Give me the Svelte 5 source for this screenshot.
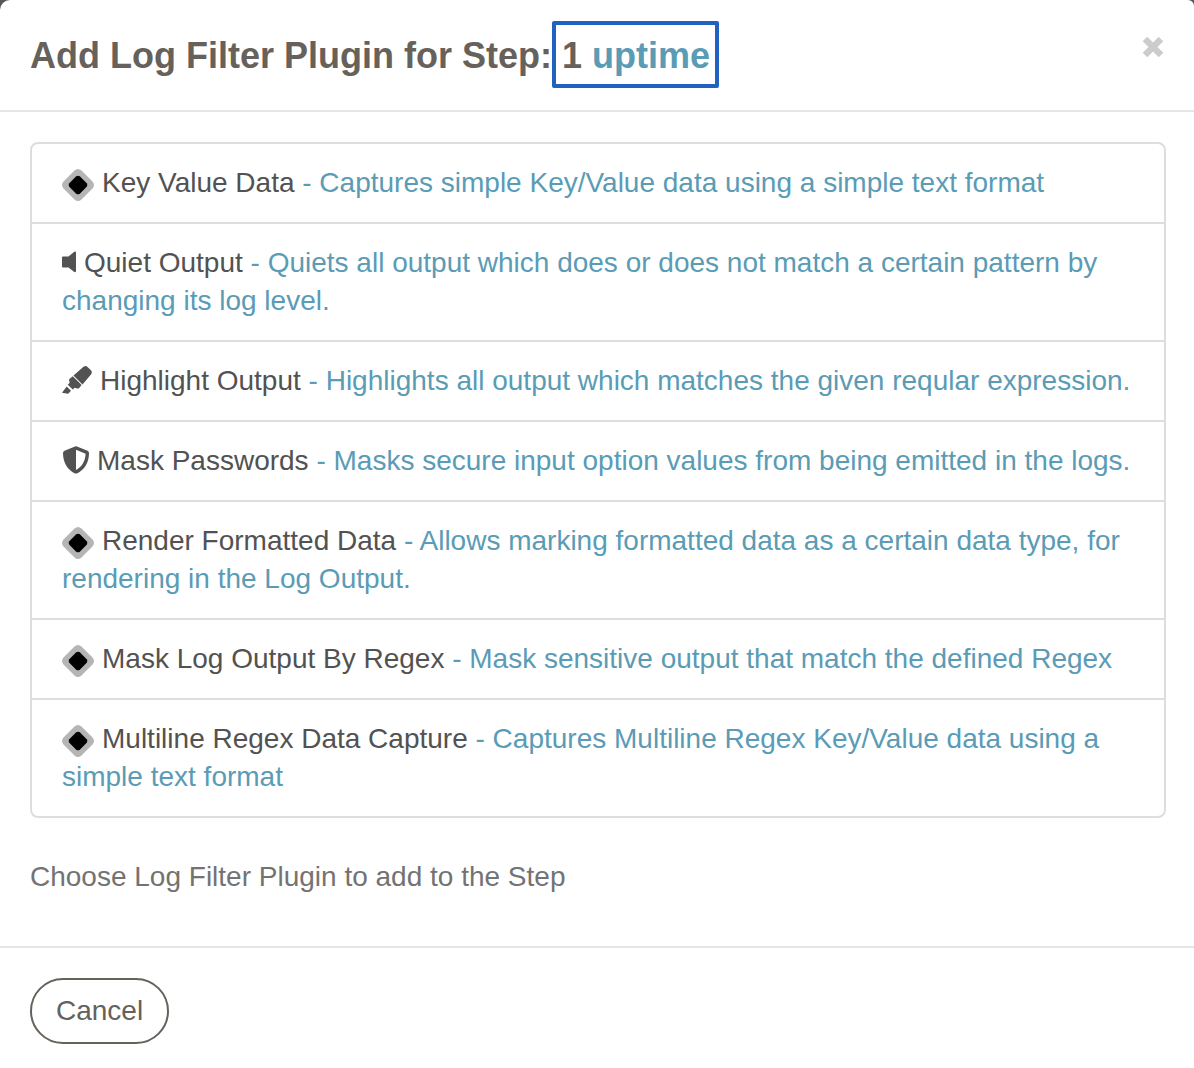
<script>
  const plugins = [
    { icon: 'plugin', name: 'Key Value Data', text: 'Captures simple Key/Value data using a simple text format' },
    { icon: 'volume', name: 'Quiet Output', text: 'Quiets all output which does or does not match a certain pattern by changing its log level.' },
    { icon: 'marker', name: 'Highlight Output', text: 'Highlights all output which matches the given reqular expression.' },
    { icon: 'shield', name: 'Mask Passwords', text: 'Masks secure input option values from being emitted in the logs.' },
    { icon: 'plugin', name: 'Render Formatted Data', text: 'Allows marking formatted data as a certain data type, for rendering in the Log Output.' },
    { icon: 'plugin', name: 'Mask Log Output By Regex', text: 'Mask sensitive output that match the defined Regex' },
    { icon: 'plugin', name: 'Multiline Regex Data Capture', text: 'Captures Multiline Regex Key/Value data using a simple text format' }
  ];
</script>

{#snippet icon(kind)}
  {#if kind === 'plugin'}
    <svg class="icon plugin" viewBox="0 0 32 32" aria-hidden="true">
      <path d="M12.500 1.500Q16-1.500 19.500 1.500L30.500 12.500Q33.500 16 30.500 19.500L19.500 30.500Q16 33.500 12.500 30.500L1.500 19.500Q-1.500 16 1.500 12.500Z" fill="#b5b5b5" />
      <path d="M14.200 7.300Q16 6 17.800 7.300L24.700 14.200Q26 16 24.700 17.800L17.800 24.700Q16 26 14.200 24.700L7.300 17.800Q6 16 7.300 14.200Z" fill="#000" />
    </svg>
  {:else if kind === 'volume'}
    <svg class="icon volume" viewBox="0 0 14 22" aria-hidden="true">
      <path d="M1 5.500H6.500L12.300.700Q14 0 14 1.500V20Q14 21.500 12.300 21L6.500 16.500H1Q0 16.500 0 15.500V6.500Q0 5.500 1 5.500Z" fill="currentColor" />
    </svg>
  {:else if kind === 'marker'}
    <svg class="icon marker" viewBox="0 0 30 28" aria-hidden="true">
      <g fill="currentColor">
        <path d="M11.500 9.500 21.500.800Q23.800-.800 25.500.900L29 4.300Q30.500 6 29.200 8.200L20.500 18.500Z" />
        <path d="M10.800 10.200 19.600 19 17.200 21.900Q16.300 22.700 15.300 22.400L12.700 21.700 10.800 23.600 5.800 18.700 7.700 16.800 7.100 14.400Q6.900 13.500 7.700 12.700Z" />
        <path d="M4.700 20.400 9 24.700 6.200 27.700 0 26.700Z" />
      </g>
    </svg>
  {:else}
    <svg class="icon shield" viewBox="0 0 26 28" aria-hidden="true">
      <path fill-rule="evenodd" d="M12 .400Q13 0 14 .400L24.500 4.700Q26 5.400 26 7C26 16.500 21.500 24 14 27.400Q13 27.800 12 27.400C4.500 24 0 16.500 0 7Q0 5.400 1.500 4.700ZM13 3.800V24C18.500 21.200 22.300 15.500 22.600 7.800Z" fill="currentColor" />
    </svg>
  {/if}
{/snippet}

<main class="modal" role="dialog" aria-labelledby="title">
  <header>
    <h1 id="title">Add Log Filter Plugin for Step:<span class="step">1 <span class="name">uptime</span></span></h1>
    <button class="close" type="button" aria-label="Close">
      <svg viewBox="0 0 22 22" aria-hidden="true">
        <path d="M3 3 19 19M19 3 3 19" stroke="currentColor" stroke-width="6.5" />
      </svg>
    </button>
  </header>
  <section>
    <div class="list">
      {#each plugins as plugin}
        <a href="#add">{@render icon(plugin.icon)}{plugin.name} <span class="desc">- {plugin.text}</span></a>
      {/each}
    </div>
    <p>Choose Log Filter Plugin to add to the Step</p>
  </section>
  <footer>
    <button class="cancel" type="button">Cancel</button>
  </footer>
</main>

<style>
  :global(body) {
    margin: 0;
    background: #58585a;
  }
  .modal {
    box-sizing: border-box;
    min-height: 100vh;
    background: #fff;
    border-radius: 10px 6px 0 0;
    font-family: 'Liberation Sans', Arial, sans-serif;
    font-size: 28px;
    line-height: 38px;
    color: #66615b;
  }
  header {
    display: flex;
    justify-content: space-between;
    align-items: flex-start;
    padding: 21px 30px 22px;
    border-bottom: 2px solid #e5e5e5;
  }
  h1 {
    display: flex;
    align-items: baseline;
    margin: 0;
    font-size: 36px;
    line-height: 57px;
    font-weight: bold;
  }
  .step {
    padding: 2px 5px 0 6px;
    border: 4px solid #2162c0;
    border-radius: 2px;
  }
  .name,
  .desc {
    color: #5a9bb5;
  }
  .close {
    display: flex;
    margin-top: 15px;
    padding: 0;
    border: 0;
    background: none;
    color: #ccc;
    cursor: pointer;
  }
  .close svg {
    width: 22px;
    height: 22px;
  }
  section {
    padding: 30px 28px 50px 30px;
  }
  .list {
    border: 2px solid #ddd;
    border-radius: 8px;
  }
  .list a {
    display: block;
    padding: 20px 30px;
    color: #525252;
    text-decoration: none;
  }
  .list a + a {
    border-top: 2px solid #ddd;
  }
  .icon {
    display: inline-block;
    margin-right: 8px;
  }
  .plugin {
    width: 32px;
    height: 32px;
    vertical-align: -9px;
  }
  .volume {
    width: 14px;
    height: 22px;
    vertical-align: -1px;
  }
  .marker {
    width: 30px;
    height: 28px;
    vertical-align: -4px;
  }
  .shield {
    width: 26px;
    height: 28px;
    margin-left: 1px;
    vertical-align: -4px;
  }
  p {
    margin: 40px 0 0;
    color: #737373;
  }
  footer {
    padding: 30px;
    border-top: 2px solid #e5e5e5;
  }
  .cancel {
    padding: 12px 24px;
    border: 2px solid #66615b;
    border-radius: 33px;
    background: none;
    color: #66615b;
    font: inherit;
    cursor: pointer;
  }
</style>
